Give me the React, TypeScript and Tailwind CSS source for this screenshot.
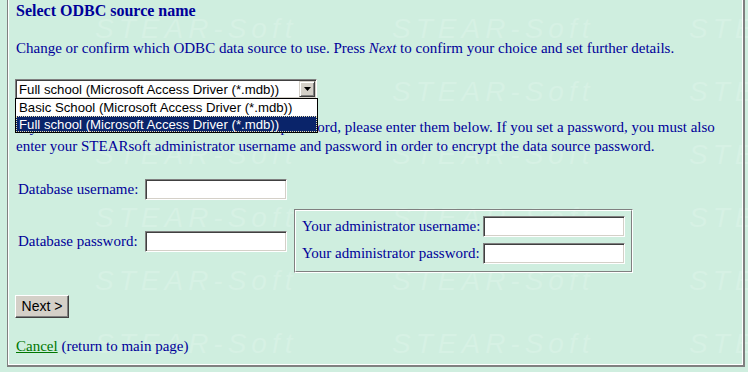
import React from "react"

const rows = [0, 1, 2, 3, 4, 5]
const cols = [0, 1, 2, 3]

function Watermark() {
  // faint tiled "STEAR-Soft" background
  return (
    <div className="pointer-events-none absolute left-[-202px] top-[15px] grid grid-cols-[repeat(4,297px)] auto-rows-[63px] select-none">
      {rows.map((r) =>
        cols.map((c) => (
          <span
            key={r + "-" + c}
            className="font-['Liberation_Sans',sans-serif] text-[28px] leading-[28px] italic tracking-[5px] text-[#d6f1e4]"
          >
            STEAR-Soft
          </span>
        ))
      )}
    </div>
  )
}

function TextInput({ w = "w-[142px]" }: { w?: string }) {
  return (
    <div
      className={
        w +
        " h-[21px] shrink-0 border border-t-[#808080] border-l-[#808080] border-b-white border-r-white bg-white shadow-[inset_1px_1px_0_#404040,inset_-1px_-1px_0_#d4d0c8]"
      }
    />
  )
}

function Label({ children, w }: { children: React.ReactNode; w: string }) {
  return <span className={w + " shrink-0 whitespace-nowrap"}>{children}</span>
}

function SourceSelect() {
  return (
    <div className="relative mt-[21px] -ml-[1px] h-[20px] w-[302px]">
      <div className="flex h-full items-center border border-t-[#808080] border-l-[#808080] border-b-white border-r-white bg-white shadow-[inset_1px_1px_0_#404040,inset_-1px_-1px_0_#d4d0c8] font-['Liberation_Sans',sans-serif] text-[13.2px] text-black">
        <span className="flex-1 pl-[3px] whitespace-nowrap">Full school (Microsoft Access Driver (*.mdb))</span>
        <span className="mr-[1px] flex h-[16px] w-[16px] items-center justify-center border border-t-[#d4d0c8] border-l-[#d4d0c8] border-b-[#404040] border-r-[#404040] bg-[#d4d0c8] shadow-[inset_1px_1px_0_white,inset_-1px_-1px_0_#808080]">
          <svg width="7" height="4" viewBox="0 0 7 4">
            <path d="M0 0h7L3.5 4z" fill="black" />
          </svg>
        </span>
      </div>
      {/* open option list */}
      <div className="absolute left-0 top-[19px] z-10 w-[303px] border border-black bg-white font-['Liberation_Sans',sans-serif] text-[13.2px] leading-[15px] text-black">
        <div className="h-[17px] pl-[3px] pt-[1px] whitespace-nowrap">Basic School (Microsoft Access Driver (*.mdb))</div>
        <div className="h-[16px] border border-dotted border-[#e8e0b0] bg-[#0a246a] pl-[2px] whitespace-nowrap text-white">
          Full school (Microsoft Access Driver (*.mdb))
        </div>
      </div>
    </div>
  )
}

export default function App() {
  return (
    <div className="relative h-[372px] w-[748px] overflow-hidden bg-[#cfeedf] font-['Liberation_Serif',serif] text-[15px] leading-[19px] text-[#000099]">
      <Watermark />
      <div className="relative ml-[7px] w-[738px] border-b-2 border-l border-r-2 border-[#808080]">
        <div className="border-b border-l border-r border-white px-[7px] pb-[8px] pt-[1px]">
          <h1 className="text-[16px] font-bold">Select ODBC source name</h1>
          <p className="mt-[19px]">
            Change or confirm which ODBC data source to use. Press <i>Next</i> to confirm your choice and set further
            details.
          </p>

          <SourceSelect />

          <p className="mt-[19px]">
            If you want to use a database username and password, please enter them below. If you set a password, you
            must also
            <br />
            enter your STEARsoft administrator username and password in order to encrypt the data source password.
          </p>

          <div className="mt-[23px] flex flex-col">
            <div className="flex items-center">
              <Label w="ml-[2px] w-[127px]">Database username:</Label>
              <TextInput />
            </div>
            <div className="mt-[9px] flex items-center">
              <Label w="ml-[2px] w-[127px]">Database password:</Label>
              <TextInput />
              <div className="ml-[7px] w-[339px] border border-t-[#808080] border-l-[#808080] border-b-white border-r-white">
                <div className="flex flex-col gap-[6px] border border-t-white border-l-white border-b-[#808080] border-r-[#808080] pb-[7px] pl-[6px] pt-[5px]">
                  <div className="flex items-center">
                    <Label w="w-[181px]">Your administrator username:</Label>
                    <TextInput />
                  </div>
                  <div className="flex items-center">
                    <Label w="w-[181px]">Your administrator password:</Label>
                    <TextInput />
                  </div>
                </div>
              </div>
            </div>
          </div>

          <button className="-ml-[1px] mt-[22px] flex h-[23px] w-[54px] items-center justify-center border border-t-white border-l-white border-b-[#404040] border-r-[#404040] bg-[#d4d0c8] font-['Liberation_Sans',sans-serif] text-[14px] text-black shadow-[inset_-1px_-1px_0_#808080]">
            Next &gt;
          </button>

          <p className="mt-[19px]">
            <a className="text-[#007700] underline">Cancel</a> (return to main page)
          </p>
        </div>
      </div>
    </div>
  )
}
